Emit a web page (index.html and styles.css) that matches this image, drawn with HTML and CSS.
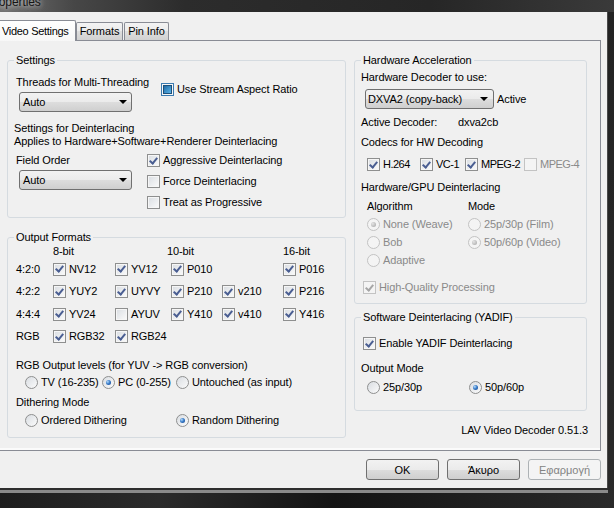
FILE: index.html
```html
<!DOCTYPE html>
<html lang="en">
<head>
    <meta charset="UTF-8">
    <meta name="viewport" content="width=device-width, initial-scale=1.0">
    <title>LAV Video Decoder Properties</title>
    <link rel="stylesheet" href="styles.css">
</head>
<body>
    <div class="titlebar"><span class="title">Properties</span></div>
    <div class="client">
        <div class="tabs">
            <div class="tab active">Video Settings</div>
            <div class="tab tab-formats">Formats</div>
            <div class="tab tab-pin">Pin Info</div>
        </div>
        <div class="pane">
            <div class="col-left">
                <div class="group settings">
                    <span class="group-title">Settings</span>
                    <div class="settings-row">
                        <div class="field">
                            <div>Threads for Multi-Threading</div>
                            <div class="combo combo-auto">Auto</div>
                        </div>
                        <label class="check aspect"><span class="cb mixed"></span>Use Stream Aspect Ratio</label>
                    </div>
                    <div class="note">Settings for Deinterlacing<br>Applies to Hardware+Software+Renderer Deinterlacing</div>
                    <div class="settings-row field-row">
                        <div class="field">
                            <div>Field Order</div>
                            <div class="combo combo-auto">Auto</div>
                        </div>
                        <div class="check-list">
                            <label class="check"><span class="cb on"></span>Aggressive Deinterlacing</label>
                            <label class="check"><span class="cb"></span>Force Deinterlacing</label>
                            <label class="check"><span class="cb"></span>Treat as Progressive</label>
                        </div>
                    </div>
                </div>

                <div class="group formats">
                    <span class="group-title">Output Formats</span>
                    <div class="format-grid">
                        <span class="col-8">8-bit</span>
                        <span class="col-10">10-bit</span>
                        <span class="col-16">16-bit</span>

                        <span>4:2:0</span>
                        <label class="check"><span class="cb on"></span>NV12</label>
                        <label class="check"><span class="cb on"></span>YV12</label>
                        <label class="check"><span class="cb on"></span>P010</label>
                        <span></span>
                        <label class="check"><span class="cb on"></span>P016</label>

                        <span>4:2:2</span>
                        <label class="check"><span class="cb on"></span>YUY2</label>
                        <label class="check"><span class="cb on"></span>UYVY</label>
                        <label class="check"><span class="cb on"></span>P210</label>
                        <label class="check"><span class="cb on"></span>v210</label>
                        <label class="check"><span class="cb on"></span>P216</label>

                        <span>4:4:4</span>
                        <label class="check"><span class="cb on"></span>YV24</label>
                        <label class="check"><span class="cb"></span>AYUV</label>
                        <label class="check"><span class="cb on"></span>Y410</label>
                        <label class="check"><span class="cb on"></span>v410</label>
                        <label class="check"><span class="cb on"></span>Y416</label>

                        <span>RGB</span>
                        <label class="check"><span class="cb on"></span>RGB32</label>
                        <label class="check"><span class="cb on"></span>RGB24</label>
                    </div>
                    <div class="levels-label">RGB Output levels (for YUV -&gt; RGB conversion)</div>
                    <div class="radio-row levels">
                        <label class="radio"><span class="rb"></span>TV (16-235)</label>
                        <label class="radio"><span class="rb on"></span>PC (0-255)</label>
                        <label class="radio"><span class="rb"></span>Untouched (as input)</label>
                    </div>
                    <div class="dither-label">Dithering Mode</div>
                    <div class="radio-row dither">
                        <label class="radio"><span class="rb"></span>Ordered Dithering</label>
                        <label class="radio"><span class="rb on"></span>Random Dithering</label>
                    </div>
                </div>
            </div>

            <div class="col-right">
                <div class="group hw">
                    <span class="group-title">Hardware Acceleration</span>
                    <div>Hardware Decoder to use:</div>
                    <div class="decoder-row">
                        <div class="combo combo-dxva">DXVA2 (copy-back)</div>
                        <span>Active</span>
                    </div>
                    <div class="active-row">
                        <span>Active Decoder:</span>
                        <span>dxva2cb</span>
                    </div>
                    <div class="codecs-label">Codecs for HW Decoding</div>
                    <div class="codec-row">
                        <label class="check"><span class="cb on"></span>H.264</label>
                        <label class="check"><span class="cb on"></span>VC-1</label>
                        <label class="check"><span class="cb on"></span>MPEG-2</label>
                        <label class="check disabled"><span class="cb dis"></span>MPEG-4</label>
                    </div>
                    <div class="deint-label">Hardware/GPU Deinterlacing</div>
                    <div class="deint-grid">
                        <span>Algorithm</span>
                        <span>Mode</span>
                        <label class="radio disabled"><span class="rb dis on"></span>None (Weave)</label>
                        <label class="radio disabled"><span class="rb dis"></span>25p/30p (Film)</label>
                        <label class="radio disabled"><span class="rb dis"></span>Bob</label>
                        <label class="radio disabled"><span class="rb dis on"></span>50p/60p (Video)</label>
                        <label class="radio disabled"><span class="rb dis"></span>Adaptive</label>
                    </div>
                    <label class="check disabled hq"><span class="cb dis on"></span>High-Quality Processing</label>
                </div>

                <div class="group sw">
                    <span class="group-title">Software Deinterlacing (YADIF)</span>
                    <label class="check yadif"><span class="cb on"></span>Enable YADIF Deinterlacing</label>
                    <div class="mode-label">Output Mode</div>
                    <div class="mode-row">
                        <label class="radio"><span class="rb"></span>25p/30p</label>
                        <label class="radio"><span class="rb on"></span>50p/60p</label>
                    </div>
                </div>

                <div class="version">LAV Video Decoder 0.51.3</div>
            </div>
        </div>
        <div class="buttons">
            <button class="btn">OK</button>
            <button class="btn">Άκυρο</button>
            <button class="btn" disabled>Εφαρμογή</button>
        </div>
    </div>
</body>
</html>
```

FILE: styles.css
```css
body {
    margin: 0;
    width: 614px;
    height: 508px;
    overflow: hidden;
    background: linear-gradient(100deg, #161616, #2b2b2b 35%, #141414 60%, #2a2a2a);
    font-family: "Liberation Sans", Arial, sans-serif;
    font-size: 11px;
    line-height: 13px;
    letter-spacing: -0.1px;
    color: #000;
    white-space: nowrap;
}
.titlebar {
    height: 12px;
    overflow: hidden;
    background: linear-gradient(90deg, #6f6f6f, #474747 12%, #2c2c2c 30%, #262626 70%, #3a3a3a);
}
.title {
    display: block;
    margin: -5px 0 0 -13px;
    font-size: 12px;
    line-height: 14px;
    color: #151515;
    text-shadow: 0 0 5px rgba(235, 235, 235, 0.9), 0 0 11px rgba(200, 200, 200, 0.7);
}
.client {
    width: 607px;
    height: 476px;
    background: #f0f0f0;
    border-right: 1px solid #4a4a4a;
    box-shadow: 0 2px 0 #2e2e2e, 0 5px 0 #8a8a8a;
}

/* tabs */
.tabs {
    display: flex;
    align-items: flex-end;
    height: 28px;
    margin-left: -3px;
}
.tab {
    box-sizing: border-box;
    height: 18px;
    line-height: 17px;
    border: 1px solid #898c95;
    border-bottom: none;
    border-radius: 2px 2px 0 0;
    background: linear-gradient(#f3f3f3, #ebebeb 50%, #dedede 50%, #d1d1d1);
    text-align: center;
}
.tab.active {
    position: relative;
    z-index: 1;
    width: 79px;
    height: 21px;
    line-height: 20px;
    margin-bottom: -1px;
    padding-left: 4px;
    text-align: left;
    letter-spacing: -0.3px;
    background: linear-gradient(#ffffff, #f7f7f7);
}
.tab-formats {
    width: 47px;
}
.tab-pin {
    width: 45px;
    margin-left: 1px;
}

.pane {
    display: flex;
    gap: 8px;
    box-sizing: border-box;
    width: 602px;
    height: 411px;
    margin-left: -1px;
    padding: 19px 13px 0 7px;
    border: 1px solid #898c95;
    box-shadow: inset 0 -2px 0 #fbfbfb;
}
.col-left {
    width: 339px;
}
.col-right {
    width: 233px;
}

/* group boxes */
.group {
    position: relative;
    box-sizing: border-box;
    border: 1px solid #d5dbe0;
    border-radius: 3px;
}
.group-title {
    position: absolute;
    top: -7px;
    left: 6px;
    padding: 0 2px;
    background: #f0f0f0;
}

/* form controls */
.check, .radio {
    display: flex;
    align-items: center;
    gap: 3px;
    height: 13px;
}
.disabled {
    color: #8a8a8a;
}
.cb, .rb {
    flex: none;
    display: flex;
    align-items: center;
    justify-content: center;
    box-sizing: border-box;
    width: 13px;
    height: 13px;
    border: 1px solid #8e8f8f;
    background: linear-gradient(135deg, #d9dde2, #fbfbfb);
    box-shadow: inset 0 0 0 1px #f6f6f6;
}
.cb.on::after {
    content: '';
    width: 3px;
    height: 6px;
    margin-top: -2px;
    border: solid #4a5e92;
    border-width: 0 2px 2px 0;
    transform: rotate(40deg);
}
.cb.mixed {
    border-color: #3b7bb0;
}
.cb.mixed::after {
    content: '';
    width: 7px;
    height: 7px;
    border: 1px solid #1d4f79;
    background: linear-gradient(135deg, #1f69a4, #5ab4e7);
}
.rb {
    border-radius: 50%;
    box-shadow: none;
}
.rb.on::after {
    content: '';
    width: 5px;
    height: 5px;
    border-radius: 50%;
    background: radial-gradient(circle at 35% 35%, #b8ddfb, #3a7dca 45%, #0f3f86);
}
.cb.dis, .rb.dis {
    border-color: #c3c3c3;
    background: #f4f4f4;
    box-shadow: none;
}
.cb.dis.on::after {
    border-color: #a6a6a6;
}
.rb.dis.on::after {
    background: radial-gradient(circle at 35% 35%, #e4e4e4, #a3a3a3);
}
.combo {
    display: flex;
    align-items: center;
    justify-content: space-between;
    box-sizing: border-box;
    height: 20px;
    padding: 0 4px 0 3px;
    border: 1px solid #707070;
    border-radius: 3px;
    background: linear-gradient(#f2f2f2, #ebebeb 50%, #dddddd 51%, #cfcfcf);
}
.combo::after {
    content: '';
    border: 4px solid transparent;
    border-top-color: #000;
    border-bottom: 0;
}

/* settings box */
.settings {
    height: 158px;
    padding: 15px 8px 0;
}
.settings-row {
    display: grid;
    grid-template-columns: 131px auto;
    align-items: start;
}
.combo-auto {
    width: 113px;
    margin: 3px 0 0 3px;
}
.aspect {
    margin: 7px 0 0 14px;
}
.note {
    margin: 10px 0 0 -2px;
}
.field-row {
    margin-top: 6px;
}
.check-list {
    display: flex;
    flex-direction: column;
    gap: 8px;
}

/* output formats box */
.formats {
    height: 201px;
    margin-top: 19px;
    padding: 7px 8px 0;
}
.format-grid {
    display: grid;
    grid-template-columns: 37px 62px 56px 51px 61px auto;
    grid-template-rows: 13px 22px 23px 22px 23px;
    align-items: center;
}
.col-8 {
    grid-column: 2;
}
.col-10 {
    grid-column: 4;
    margin-left: -4px;
}
.col-16 {
    grid-column: 6;
}
.levels-label {
    margin-top: 11px;
}
.radio-row {
    display: grid;
    margin-left: 9px;
}
.levels {
    grid-template-columns: 77px 74px auto;
    margin-top: 4px;
}
.dither-label {
    margin-top: 7px;
}
.dither {
    grid-template-columns: 151px auto;
    margin-top: 5px;
}

/* hardware box */
.hw {
    height: 244px;
    padding: 10px 6px 0;
}
.decoder-row {
    display: flex;
    align-items: center;
    gap: 3px;
    margin: 5px 0 0 4px;
}
.combo-dxva {
    width: 129px;
    padding-left: 2px;
    padding-right: 5px;
}
.active-row {
    display: grid;
    grid-template-columns: 97px auto;
    margin-top: 7px;
}
.codecs-label {
    margin-top: 7px;
}
.codec-row {
    display: grid;
    grid-template-columns: 53px 45px 59px auto;
    margin: 9px 0 0 6px;
    letter-spacing: -0.5px;
}
.deint-label {
    margin-top: 10px;
}
.deint-grid {
    display: grid;
    grid-template-columns: 101px auto;
    grid-auto-rows: 13px;
    row-gap: 5px;
    margin: 6px 0 0 6px;
}
.hq {
    margin: 14px 0 0 2px;
}

/* software box */
.sw {
    height: 94px;
    margin-top: 13px;
    padding: 19px 6px 0;
}
.yadif {
    margin-left: 2px;
}
.mode-label {
    margin-top: 12px;
}
.mode-row {
    display: grid;
    grid-template-columns: 102px auto;
    margin: 6px 0 0 6px;
}
.version {
    margin: 13px -1px 0 0;
    text-align: right;
}

/* dialog buttons */
.buttons {
    display: flex;
    justify-content: flex-end;
    gap: 8px;
    margin-top: 8px;
    padding-right: 6px;
}
.btn {
    width: 73px;
    height: 21px;
    padding: 0;
    border: 1px solid #707070;
    border-radius: 3px;
    background: linear-gradient(#f2f2f2, #ebebeb 50%, #dddddd 51%, #cfcfcf);
    font-family: inherit;
    font-size: 11px;
    color: #000;
}
.btn:disabled {
    border-color: #adb2b5;
    background: #f4f4f4;
    color: #838383;
}
```
